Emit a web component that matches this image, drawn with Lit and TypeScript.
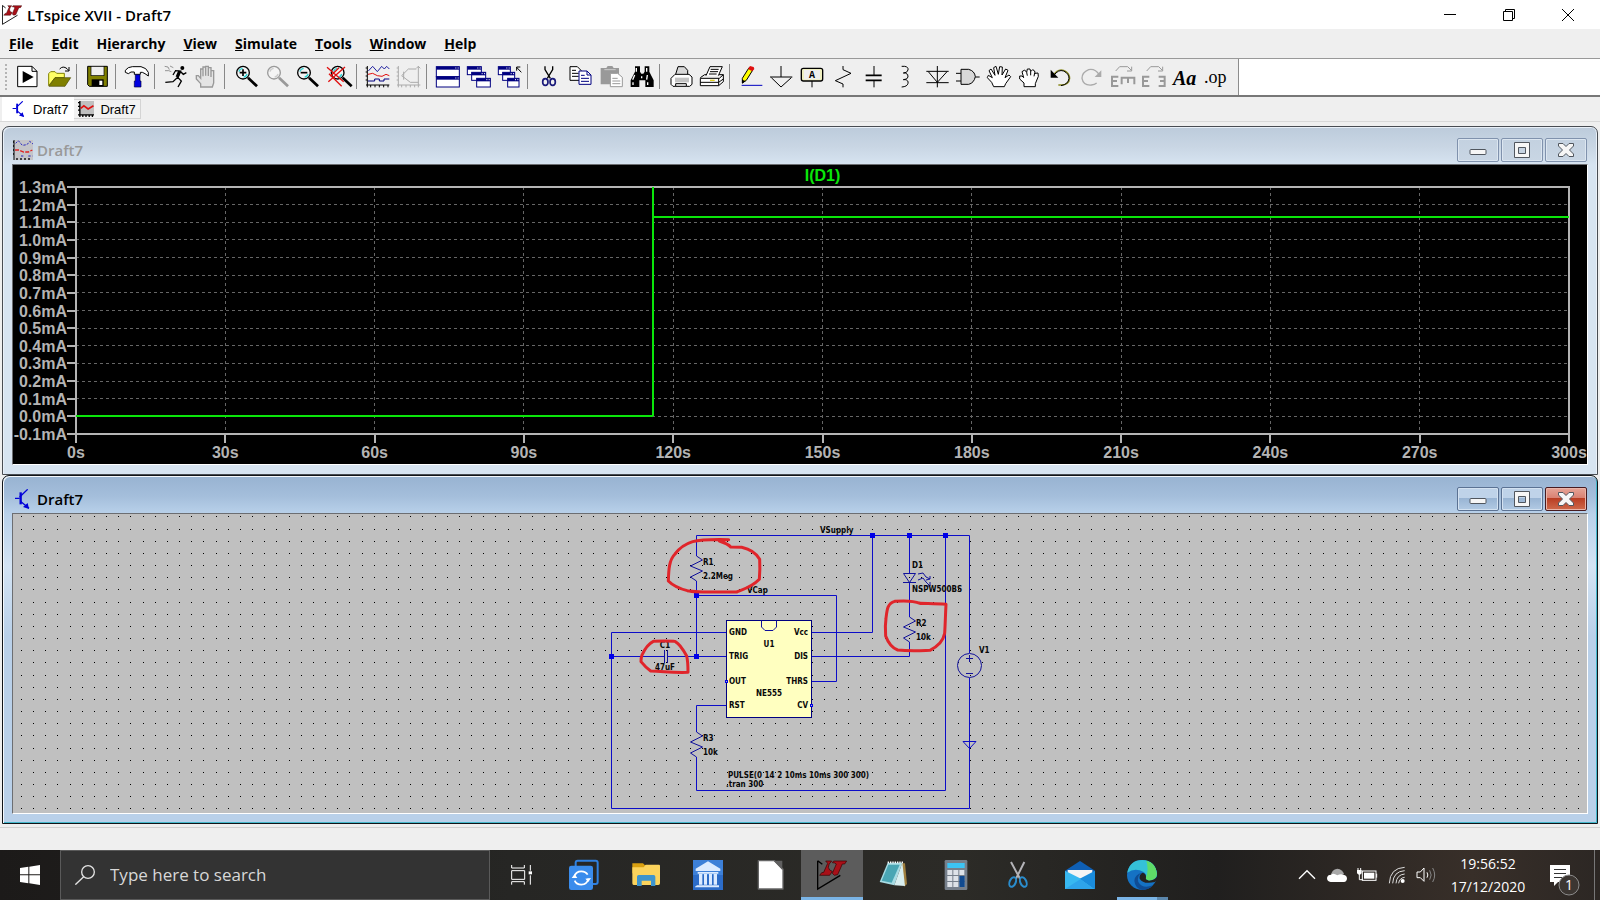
import { LitElement, html, svg, css } from "lit";
import { customElement, property } from "lit/decorators.js";
import { classMap } from "lit/directives/class-map.js";

const range = (n: number) => Array.from({ length: n }, (_, i) => i);

/* ---------- toolbar glyphs, drawn on a 72 x 72 grid ---------- */

const lens = (x: number, ring: string, shine: string, mark: unknown) => svg`
  <circle cx=${x} cy="23" r="19" fill="#f4f4f4" stroke=${ring} stroke-width="4" />
  <path d="M${x - 12} 20 q2 -9 11 -10 M${x + 12} 27 q-2 8 -10 9" fill="none" stroke=${shine} stroke-width="4" />
  <path d="M${x + 15} 38 L${x + 42} 64" stroke=${ring} stroke-width="8" />
  ${mark}`;

const miniWindow = (x: number, y: number, w: number, h: number) => svg`
  <rect x=${x} y=${y} width=${w} height=${h} fill="#fff" stroke="#000080" stroke-width="3" />
  <rect x=${x} y=${y} width=${w} height="9" fill="#000080" />
  <path d="M${x + w - 12} ${y + 4} h3 m4 0 h3" stroke="#fff" stroke-width="3" />`;

const glyphs: Record<string, unknown> = {
  run: svg`<path d="M5 4 H48 L63 19 V65 H5 Z" fill="#fff" stroke="#000" stroke-width="3" /><path d="M48 4 V19 H63" fill="none" stroke="#000" stroke-width="3" /><path d="M20 18 V54 L53 36 Z" />`,
  open: svg`<path d="M5 62 V26 L11 20 H24 L29 25 H52 V38 H24 Z" fill="#ffff66" stroke="#808000" stroke-width="3" /><path d="M6 64 L24 38 H71 L54 64 Z" fill="#808000" stroke="#4a4a00" stroke-width="2" /><path d="M38 12 Q48 1 60 11 L66 17 M66 6 V18 H54" fill="none" stroke="#000" stroke-width="3" />`,
  save: svg`<path d="M5 4 H64 V64 H10 L5 59 Z" fill="#808000" stroke="#000" stroke-width="3" /><rect x="15" y="4" width="39" height="28" fill="#efefef" stroke="#000" stroke-width="2" /><rect x="17" y="43" width="36" height="21" /><rect x="40" y="47" width="9" height="13" fill="#fff" />`,
  hammer: svg`<path d="M1 16 L10 8 L22 5 H48 L62 11 L70 22 V33 L60 26 L52 22 H46 V28 H28 V21 H18 L10 26 L1 22 Z" fill="#fff" stroke="#000" stroke-width="3" /><path d="M31 29 H45 V48 H48 V66 H28 V48 H31 Z" fill="#0000e0" stroke="#000040" stroke-width="2" />`,
  runner: svg`<circle cx="55" cy="9" r="6" /><path d="M33 17 L50 18 L42 38 L52 48 L42 66 M42 36 L27 50 L4 52 M50 20 L58 28 L67 23 M34 18 L27 30" fill="none" stroke="#000" stroke-width="4" /><path d="M47 18 L39 36" stroke="#000" stroke-width="9" /><path d="M2 4 L12 6 L16 14 M3 17 H14 L22 20 M18 3 L28 8" fill="none" stroke="#666" stroke-width="2" />`,
  halt: svg`<path d="M17 64 V56 L4 42 V32 H10 L17 40 V12 H24 V34 V6 H32 V32 V4 H40 V33 V8 H48 V36 V17 H56 V54 L52 66 H17 Z" fill="#e4e4e4" stroke="#999" stroke-width="4" />`,
  zoomIn: lens(27, "#000", "#2fd5d5", svg`<path d="M17 23 H37 M27 13 V33" stroke="#000" stroke-width="5" />`),
  zoomArea: lens(27, "#999", "#ccc", svg``),
  zoomOut: lens(24, "#000", "#2fd5d5", svg`<path d="M14 23 H34" stroke="#000" stroke-width="5" />`),
  zoomFit: lens(32, "#000", "#2fd5d5", svg`<path d="M0 7 L50 50 M54 6 L4 50 M6 26 L44 64 M36 8 L10 34" stroke="#e01010" stroke-width="4" />`),
  plot: svg`<path d="M4 3 V67 M-1 9 H4 M-1 21 H4 M-1 33 H4 M-1 45 H4 M0 60 H70 M14 60 V67 M27 60 V67 M40 60 V67 M53 60 V67 M66 60 V67" stroke="#000" stroke-width="3" fill="none" /><path d="M7 18 L20 4 L34 20 L47 4 L55 12 L62 4 L70 12" stroke="#2020a0" stroke-width="3" fill="none" /><path d="M6 28 L20 25 L34 32 L48 34 L60 28 L70 32" stroke="#e01010" stroke-width="3" fill="none" /><path d="M6 48 H26 V42 H40 V48 H54 V42 H70" stroke="#000080" stroke-width="3" fill="none" />`,
  fft: svg`<path d="M4 3 V67 M-1 9 H4 M-1 21 H4 M-1 33 H4 M-1 45 H4 M0 60 H70 M14 60 V67 M27 60 V67 M40 60 V67 M53 60 V67 M64 3 V67 M58 10 L64 4 L70 10 M14 32 L34 12 H58 M14 32 L40 52 H64 M20 20 V44" stroke="#aaa" stroke-width="3" fill="none" />`,
  tile: svg`${miniWindow(1, 5, 69, 30)}${miniWindow(1, 35, 69, 31)}`,
  cascade: svg`${miniWindow(1, 5, 42, 24)}${miniWindow(14, 22, 42, 24)}${miniWindow(29, 40, 41, 26)}`,
  closeAll: svg`${miniWindow(1, 5, 36, 24)}${miniWindow(14, 22, 36, 24)}${miniWindow(29, 40, 34, 26)}<path d="M70 22 L56 7 M56 17 V6 H67" fill="none" stroke="#000" stroke-width="3" />`,
  cut: svg`<path d="M24 4 V14 L40 40 M47 4 V14 L31 40" fill="none" stroke="#000" stroke-width="4" /><ellipse cx="25" cy="51" rx="8" ry="10" fill="none" stroke="#1a1a7a" stroke-width="5" /><ellipse cx="47" cy="51" rx="8" ry="10" fill="none" stroke="#1a1a7a" stroke-width="5" />`,
  copy: svg`<path d="M6 5 H28 L39 16 V46 H6 Z" fill="#fff" stroke="#000" stroke-width="3" /><path d="M12 16 H24 M12 25 H32 M12 34 H32" stroke="#000" stroke-width="3" /><path d="M33 18 H57 L69 30 V58 H33 Z" fill="#fff" stroke="#000080" stroke-width="3" /><path d="M57 18 V30 H69 M39 31 H50 M39 40 H63 M39 49 H63" fill="none" stroke="#000080" stroke-width="3" />`,
  paste: svg`<path d="M5 9 H22 L26 3 H40 L44 9 H60 V58 H5 Z" fill="#999" /><path d="M16 14 H50" stroke="#ccc" stroke-width="3" /><path d="M34 25 H56 L70 37 V65 H34 Z" fill="#fff" stroke="#999" stroke-width="3" /><path d="M40 40 H56 M40 48 H64 M40 56 H64" stroke="#999" stroke-width="3" />`,
  find: svg`<path d="M15 4 H30 V20 L34 26 H40 L44 20 V4 H58 V20 L71 46 V66 H46 V46 H28 V66 H2 V46 L15 20 Z" /><path d="M19 9 V20 M14 30 L8 44 M50 9 V20 M52 30 L50 44 M9 52 V60 M53 52 V60 M35 34 V40" stroke="#fff" stroke-width="4" />`,
  preview: svg`<path d="M20 28 L27 5 H46 L56 16 V30" fill="#d8d8d8" stroke="#000" stroke-width="3" /><path d="M6 40 L18 28 H60 L69 36 V58 L62 64 H52 V56 H20 V64 H12 L6 58 Z" fill="#fff" stroke="#000" stroke-width="3" /><path d="M18 38 H60 V52 H18 Z" fill="#c4c4c4" /><path d="M20 64 H52" stroke="#000" stroke-width="3" />`,
  print: svg`<path d="M18 32 L30 5 H67 L55 32" fill="#fff" stroke="#000" stroke-width="3" /><path d="M32 13 H56 M30 20 H54 M27 27 H50" stroke="#000" stroke-width="3" /><path d="M1 38 L14 29 H18 M57 29 H70 L58 40 H1 V62 H56 L70 50 V29 M56 40 V62 M1 52 H56 L70 42" fill="#fff" stroke="#000" stroke-width="3" /><path d="M30 46 H44" stroke="#e0d020" stroke-width="4" />`,
  wire: svg`<path d="M10 40 L30 8 L42 14 L22 46 L10 54 Z" fill="#ffff00" stroke="#000" stroke-width="3" /><path d="M27 12 L33 3 L44 6 L46 12 L40 19 Z" fill="#e01010" /><path d="M9 56 V44 L20 48 Z" /><path d="M8 61 H70" stroke="#0000c0" stroke-width="3" />`,
  ground: svg`<path d="M33 3 V36 M0 36 H67 M4 38 L33 66 L64 38" fill="none" stroke="#000" stroke-width="3" />`,
  label: svg`<rect x="1" y="10" width="64" height="38" rx="6" fill="#efefc0" stroke="#000" stroke-width="4" /><rect x="9" y="15" width="48" height="28" fill="#efefef" /><path d="M33 48 V67" stroke="#000" stroke-width="3" /><text class="g-label" x="33" y="40">A</text>`,
  resistor: svg`<path d="M33 3 V14 L57 25 L10 47 L33 57 V67" fill="none" stroke="#000" stroke-width="3" />`,
  capacitor: svg`<path d="M33 3 V31 M33 48 V67" stroke="#000" stroke-width="3" /><path d="M8 31 H56 M8 46 H56" stroke="#000" stroke-width="5" />`,
  inductor: svg`<path d="M23 4 H32 Q44 6 42 15 Q40 24 28 24 H34 Q44 27 42 36 Q40 44 28 44 H34 Q44 46 42 55 Q40 65 23 66" fill="none" stroke="#000" stroke-width="3" />`,
  diode: svg`<path d="M37 3 V67 M4 19 H71 M10 20 L37 52 L66 20 M4 53 H71" fill="none" stroke="#000" stroke-width="3" />`,
  gate: svg`<path d="M15 13 H38 Q56 18 58 35 Q54 54 38 58 H15 Z" fill="#d8d8d8" stroke="#000" stroke-width="3" /><path d="M0 25 H15 M0 48 H15 M58 36 H71" stroke="#000" stroke-width="3" />`,
  move: svg`<path d="M20 65 L14 52 L1 38 L4 31 L16 38 L6 17 L12 12 L24 31 L20 8 L27 4 L34 28 L38 5 L46 6 L45 30 L56 12 L63 16 L54 38 L66 30 L71 35 L56 56 L52 65 Z" fill="#fff" stroke="#000" stroke-width="3" />`,
  drag: svg`<path d="M18 65 V54 L5 42 V33 H12 L17 38 L12 20 L20 15 L26 22 L28 12 H36 L38 20 L44 14 L50 18 L51 25 L60 24 L61 34 L52 56 V65 Z" fill="#fff" stroke="#000" stroke-width="3" /><path d="M26 22 L28 32 M38 20 V31 M50 24 L48 34" stroke="#000" stroke-width="3" />`,
  undo: svg`<path d="M12 32 Q26 10 44 16 Q62 24 62 40 Q60 60 36 60 H28" fill="none" stroke="#8a8a20" stroke-width="4" /><path d="M14 32 Q28 12 44 18 Q60 26 60 40 Q58 58 36 62" fill="none" stroke="#000" stroke-width="3" /><path d="M5 14 V38 H28 Z" fill="#000" />`,
  redo: svg`<path d="M58 30 Q46 10 26 14 Q6 22 6 40 Q10 62 34 60 Q44 59 50 54" fill="none" stroke="#aaa" stroke-width="4" /><path d="M64 16 V36 H44 Z" fill="#aaa" />`,
  mirror: svg`<path d="M14 18 L26 5 H50 L60 15 M62 5 V18 H48" fill="none" stroke="#999" stroke-width="3" /><path d="M22 35 H3 V63 H22 M3 48 H18 M32 58 V38 H70 V58 M51 38 V54" fill="none" stroke="#999" stroke-width="6" />`,
  rotate: svg`<path d="M14 18 L26 5 H50 L60 15 M62 5 V18 H48" fill="none" stroke="#999" stroke-width="3" /><path d="M22 35 H3 V63 H22 M3 48 H18 M50 35 H68 V63 H50 M68 48 H54" fill="none" stroke="#999" stroke-width="6" />`,
  text: svg`<text class="g-text" x="0" y="60">Aa</text>`,
  directive: svg`<text class="g-op" x="0" y="54">.op</text>`,
};

const toolGroups: [string, string][][] = [
  [["run", "New schematic"], ["open", "Open"]],
  [["save", "Save"]],
  [["hammer", "Control panel"]],
  [["runner", "Run"], ["halt", "Halt"]],
  [["zoomIn", "Zoom in"], ["zoomArea", "Zoom area"], ["zoomOut", "Zoom out"], ["zoomFit", "Zoom full extents"]],
  [["plot", "Autorange"], ["fft", "FFT"]],
  [["tile", "Tile windows"], ["cascade", "Cascade windows"], ["closeAll", "Close windows"]],
  [["cut", "Cut"], ["copy", "Copy"], ["paste", "Paste"], ["find", "Find"]],
  [["preview", "Print setup"], ["print", "Print"]],
  [["wire", "Wire"], ["ground", "Ground"], ["label", "Label net"], ["resistor", "Resistor"], ["capacitor", "Capacitor"], ["inductor", "Inductor"], ["diode", "Diode"], ["gate", "Component"], ["move", "Move"], ["drag", "Drag"], ["undo", "Undo"], ["redo", "Redo"], ["mirror", "Rotate"], ["rotate", "Mirror"], ["text", "Text"], ["directive", "SPICE directive"]],
];

const transistor = html`<svg class="ico" viewBox="-4 0 60 60"><path d="M2 28 H16 M16 24 L40 1 M20 38 L44 58" fill="none" stroke="#0000d8" stroke-width="4" /><path d="M19 10 V46" stroke="#0000d8" stroke-width="7" /><path d="M44 60 L40 42 L26 54 Z" fill="#0000d8" /></svg>`;
const waveform = html`<svg class="ico" viewBox="0 0 60 60"><rect x="6" width="54" height="54" fill="#c0c0c0" /><path d="M7 0 V60 M0 6 H7 M0 20 H7 M0 34 H7 M0 52 H60 M18 52 V60 M30 52 V60 M42 52 V60 M54 52 V60" fill="none" stroke="#000" stroke-width="5" /><path d="M10 28 L22 18 L38 30 L58 18" fill="none" stroke="#e01010" stroke-width="6" /></svg>`;
const waveformDim = html`<svg class="ico" viewBox="0 0 60 60"><rect x="4" width="56" height="60" fill="#c4c4c8" /><path d="M3 0 V60" stroke="#000" stroke-width="3" /><path d="M0 6 H3 M0 18 H3 M0 30 H3 M0 42 H3 M12 54 V60 M24 54 V60 M36 54 V60 M48 54 V60" stroke="#000" stroke-width="4" /><path d="M8 10 L16 2 L28 16 L42 14 L50 4 L60 12 M24 48 H34 M46 48 H58" fill="none" stroke="#2828c0" stroke-width="3" stroke-dasharray="7 4" /><path d="M6 30 L18 30 L32 36 L46 36 L58 30" fill="none" stroke="#e02020" stroke-width="4" stroke-dasharray="12 4" /></svg>`;

/* slanted two-part emblem in front of an open amplifier triangle */
const emblem = svg`
  <path d="M2 2 V87 L70 46 M2 2 L16 13" fill="none" stroke="#000" stroke-width="4" />
  <path d="M26 3 H44 Q34 12 34 22 Q36 32 46 34 L38 46 H8 L14 38 L20 37 L32 10 Z" fill="#a81018" stroke="#300" stroke-width="2" />
  <path d="M50 3 H89 L83 12 H76 L62 44 L52 46 L46 40 L58 12 Q54 8 46 8 Z" fill="#a81018" stroke="#300" stroke-width="2" />`;
const ltLogo = html`<svg class="lt" viewBox="0 0 90 90">${emblem}</svg>`;

/* ---------- application menu and tool strip ---------- */

@customElement("tool-strip")
class ToolStrip extends LitElement {
  static styles = css`
    :host { display: flex; background: #fff; height: 36px; }
    .bar { display: flex; align-items: stretch; background: #efefef; border-right: 1px solid #8c8c8c; padding-right: 7px; }
    .grip { width: 2px; margin: 5px 5px 4px; background: repeating-linear-gradient(#b4b4b4 0 2px, transparent 2px 4px); }
    .group { display: flex; }
    .group + .group::before { content: ""; width: 1px; margin: 5px 5px 6px 2px; background: #888; }
    button { width: 31px; padding: 0; border: 0; background: none; display: flex; align-items: center; justify-content: center; }
    svg { width: 24px; height: 24px; overflow: visible; }
    .g-label { font: bold 30px "Liberation Mono", monospace; text-anchor: middle; }
    .g-text { font: italic bold 60px "Liberation Serif", serif; }
    .g-op { font: 54px "Liberation Serif", serif; }
  `;
  render() {
    return html`<div class="bar" role="toolbar">
      <div class="grip"></div>
      ${toolGroups.map((g) => html`<div class="group">${g.map(([id, name]) => html`<button aria-label=${name} title=${name}><svg viewBox="0 0 72 72">${glyphs[id]}</svg></button>`)}</div>`)}
    </div>`;
  }
}

/* ---------- child window frame ---------- */

@customElement("child-window")
class ChildWindow extends LitElement {
  @property() heading = "";
  @property({ type: Boolean }) active = false;
  static styles = css`
    :host { display: flex; min-height: 0; min-width: 0; }
    .frame { flex: 1; min-width: 0; display: flex; flex-direction: column; border: 1px solid #484c52; border-radius: 7px 7px 0 0; background: linear-gradient(#bccbdb, #c9d6e4 20px, #d7e4f1 38px); box-shadow: inset 1px 1px 0 #e9f0f8, inset -1px 0 0 #e9f0f8; }
    .active { border-color: #101418; background: linear-gradient(#98b3d1, #a4bedb 20px, #b9d1ea 38px, #d4e4f4 90px, #b9d0e9 160px); box-shadow: inset 1px 1px 0 #f4f8fc, inset -1px -1px 0 #45b8cc; }
    header { height: 29px; padding: 8px 10px 0; display: flex; align-items: center; }
    .icon { width: 20px; height: 20px; margin-right: 4px; }
    h2 { flex: 1; margin: 0; font: 600 15px "Open Sans", sans-serif; color: #999; }
    .active h2 { color: #000; }
    .buttons { display: flex; gap: 2px; }
    button { box-sizing: border-box; width: 42px; height: 24px; padding: 0; border: 1px solid #8092ad; border-radius: 2px; background: linear-gradient(#c3d1e0, #c9d6e4); box-shadow: inset 0 0 0 1px #dce6f0; display: flex; align-items: center; justify-content: center; }
    .active button { border-color: #5b7293; background: linear-gradient(#bfd3e9 0 45%, #98b4d3 46%, #b2cae4); box-shadow: inset 0 0 0 1px #d4e2f1; }
    .active .close { border-color: #471b20; background: linear-gradient(#e6a497, #d98172 45%, #b93c22 46%, #cf6a4c); box-shadow: inset 0 0 0 1px #eab5aa; }
    button svg { width: 18px; height: 16px; }
    .body { flex: 1; min-height: 0; margin: 0 9px 9px; display: flex; border: 1px solid; border-color: #6c6e72 #fff #fff #6c6e72; overflow: hidden; }
    ::slotted(*) { flex: 1; min-width: 0; }
  `;
  render() {
    return html`<section class=${classMap({ frame: true, active: this.active })}>
      <header>
        <span class="icon"><slot name="icon"></slot></span>
        <h2>${this.heading}</h2>
        <div class="buttons">
          <button aria-label="Minimize"><svg viewBox="0 0 18 16"><rect x="1" y="7.5" width="16" height="5" rx="1" fill="#f6f6f6" stroke="#50565e" /></svg></button>
          <button aria-label="Maximize"><svg viewBox="0 0 18 16"><path fill-rule="evenodd" d="M1.5 .5 H16.5 V15.5 H1.5 Z M5.5 5.5 V11.5 H12.5 V5.5 Z" fill="#f6f6f6" stroke="#50565e" /></svg></button>
          <button class="close" aria-label="Close"><svg viewBox="0 0 18 16"><path d="M1.5 1.5 H6 L9 4.5 L12 1.5 H16.5 V4 L12.5 8 L16.5 12 V14.5 H12 L9 11.5 L6 14.5 H1.5 V12 L5.5 8 L1.5 4 Z" fill="#f6f6f6" stroke="#50565e" /></svg></button>
        </div>
      </header>
      <div class="body"><slot></slot></div>
    </section>`;
  }
}

/* ---------- waveform viewer ---------- */

@customElement("wave-plot")
class WavePlot extends LitElement {
  static styles = css`
    :host { display: flex; background: #000; padding: 22px 18px 30px 63px; }
    svg { flex: 1; min-width: 0; overflow: visible; font: bold 16px "Liberation Sans", sans-serif; }
    .grid { stroke: #666; stroke-width: 1; stroke-dasharray: 3 3; shape-rendering: crispEdges; }
    .axis { stroke: #b4b4b4; stroke-width: 2; fill: none; shape-rendering: crispEdges; }
    .tick { fill: #b4b4b4; }
    .y { text-anchor: end; }
    .x { text-anchor: middle; }
    .trace { stroke: #0ae60a; stroke-width: 2; shape-rendering: crispEdges; }
    .name { fill: #0ae60a; text-anchor: middle; }
  `;
  render() {
    const top = 1.3, span = 1.4, total = 300;
    const yAt = (ma: number) => `${((top - ma) / span) * 100}%`;
    const xAt = (s: number) => `${(s / total) * 100}%`;
    const levels = range(15).map((i) => (13 - i) / 10);
    const times = range(11).map((i) => i * 30);
    const line = (a: number, b: number, c: number, d: number) => svg`<line class="trace" x1=${xAt(a)} y1=${yAt(b)} x2=${xAt(c)} y2=${yAt(d)} />`;
    return html`<svg width="100%" height="100%">
      ${levels.slice(1, -1).map((v) => svg`<line class="grid" x1="0" x2="100%" y1=${yAt(v)} y2=${yAt(v)} />`)}
      ${times.slice(1, -1).map((t) => svg`<line class="grid" y1="0" y2="100%" x1=${xAt(t)} x2=${xAt(t)} />`)}
      <rect class="axis" width="100%" height="100%" />
      ${levels.map((v) => svg`<line class="axis" x1="-9" x2="0" y1=${yAt(v)} y2=${yAt(v)} /><text class="tick y" x="-9" y=${yAt(v)} dy="6">${v.toFixed(1)}mA</text>`)}
      ${times.map((t) => svg`<svg class="mark" x=${xAt(t)} y="100%"><line class="axis" y1="0" y2="9" /><text class="tick x" x="0" y="24">${t}s</text></svg>`)}
      <text class="name" x="50%" y="-6">I(D1)</text>
      ${line(0, 0, 116, 0)}${line(116, 0, 116, 1.3)}${line(116, 1.13, 300, 1.13)}
    </svg>`;
  }
}

/* ---------- schematic editor ---------- */

const zigzag = (x: number, y: number) => svg`<path class="part" d="M${x} ${y} l6 4 l-12 6 l12 5 l-12 6 l6 4" />`;

const labels: [number, number, string, string?][] = [
  [820, 533, "VSupply"], [703, 565, "R1"], [703, 579, "2.2Meg"], [747, 593, "VCap"],
  [912, 568, "D1"], [912, 592, "NSPW500BS"], [916, 626, "R2"], [916, 640, "10k"],
  [979, 653, "V1"], [665, 648, "C1", "mid"], [665, 670, "47uF", "mid"],
  [729, 635, "GND"], [729, 659, "TRIG"], [729, 684, "OUT"], [729, 708, "RST"],
  [808, 635, "Vcc", "end"], [808, 659, "DIS", "end"], [808, 684, "THRS", "end"], [808, 708, "CV", "end"],
  [769, 647, "U1", "mid"], [769, 696, "NE555", "mid"], [703, 741, "R3"], [703, 755, "10k"],
  [728, 778, "PULSE(0 14 2 10ms 10ms 300 300)"], [726, 787, ".tran 300"],
];

@customElement("schematic-sheet")
class SchematicSheet extends LitElement {
  static styles = css`
    :host { display: flex; background: #c0c0c0; }
    svg { flex: 1; min-width: 0; height: 100%; }
    .dots { stroke: #000; stroke-width: 1; shape-rendering: crispEdges; }
    .wire { fill: none; stroke: #0c0cc8; stroke-width: 1; }
    .part { fill: none; stroke: #10109a; stroke-width: 1; }
    .chip { fill: #ffffc0; stroke: #000080; }
    .node { fill: #0000e8; }
    .pin { fill: #c0c0c0; stroke: #0000e8; }
    text { font: bold 8px "DejaVu Sans Condensed", "DejaVu Sans", sans-serif; font-stretch: condensed; fill: #080808; }
    .mid { text-anchor: middle; }
    .end { text-anchor: end; }
    .pen { fill: none; stroke: #e0252b; stroke-width: 9; stroke-linecap: round; stroke-linejoin: round; }
  `;
  render() {
    const pitch = 1557 / 128;
    const dots = range(25).map((j) => range(220).map((i) => `M${Math.round(21 + i * pitch)} ${Math.round(516.4 + j * pitch) + 0.5}h1`).join("")).join("");
    const nodes = [[872, 535], [909, 535], [945, 535], [696, 595], [696, 656], [611, 656]];
    return html`<svg width="100%" height="100%"><g transform="translate(-13 -514)">
      <path class="dots" d=${dots} />
      <path class="wire" d="M696.5 556 V535.5 H969.5 V653 M969.5 678 V808.5 H611.5 V632.5 H726.5 M872.5 535.5 V632.5 H811.5 M909.5 535.5 V573 M909.5 583 V617 M909.5 642 V656.5 H811.5 M945.5 535.5 V790.5 H696.5 V757 M696.5 732 V705.5 H726.5 M696.5 581 V656.5 M696.5 595.5 H836.5 V681.5 H811.5 M611.5 656.5 H664 M668 656.5 H726.5" />
      <rect class="chip" x="726.5" y="620.5" width="85" height="97" />
      <path class="part" d="M761.5 620.5 V627 L765 630.5 H773 L776.5 627 V620.5" />
      ${zigzag(696.5, 556)}${zigzag(909.5, 617)}${zigzag(696.5, 732)}
      <path class="part" d="M903.5 573.5 H915.5 L909.5 582.5 Z M903 582.5 H916 M664.5 650 V663 M667.5 650 V663 M918 574 L923 573 L926 577 L930 579 M918 580 L923 578 L926 582 L930 586 M926 580 L930 579 L930 576 M926 586 L930 586 L930 582" />
      <circle class="part" cx="969.5" cy="665.5" r="12" />
      <path class="part" d="M966 658.5 H973 M969.5 655 V662 M966 673.5 H973" />
      <path class="wire" d="M963 741.5 H976 L969.5 748.5 Z" />
      ${nodes.map(([x, y]) => svg`<rect class="node" x=${x - 2} y=${y - 2} width="5" height="5" />`)}
      <rect class="pin" x="725.5" y="680.5" width="2" height="2" /><rect class="pin" x="810.5" y="704.5" width="2" height="2" />
      ${labels.map(([x, y, t, a]) => svg`<text x=${x} y=${y} class=${a ?? ""}>${t}</text>`)}
      <g class="pen" transform="translate(600 510) scale(.33333)">
        <path d="M386 89 C340 88 300 89 278 95 C255 102 240 112 225 132 C207 150 206 180 205 213 C220 228 238 236 262 242 C290 248 370 246 410 246 C430 238 455 232 478 208 C480 185 480 165 479 148 C470 132 452 118 425 112 L392 111 C385 102 370 97 358 93" />
        <path d="M222 394 C200 392 175 393 160 394 C148 400 135 415 126 435 C122 447 123 452 123 455 C135 470 145 478 152 483 C190 483 210 489 264 487 C264 465 263 450 260 438 C250 420 240 402 226 395" />
        <path d="M960 280 C940 272 920 271 884 274 C862 280 861 300 858 325 C855 345 856 365 857 378 C865 400 880 415 893 420 C930 424 960 422 990 421 C1012 410 1030 392 1034 370 C1036 340 1036 320 1038 283 C1010 281 990 281 960 280" />
      </g>
    </g></svg>`;
  }
}

/* ---------- desktop taskbar ---------- */

const apps: { name: string; art: unknown; state?: string }[] = [
  { name: "Task view", art: svg`<path d="M14 15 V24 H52 V15 M14 74 V65 H52 V74 M14 32 H53 V58 H14 Z M70 15 V32 M70 46 V74" fill="none" stroke="#fff" stroke-width="3" /><rect x="65" y="34" width="10" height="9" fill="#fff" />` },
  { name: "Sync", art: svg`<path d="M20 22 V8 Q20 2 26 2 H80 Q86 2 86 8 V66 Q86 72 80 72 H70" fill="none" stroke="#2f80e0" stroke-width="6" /><rect x="0" y="17" width="72" height="73" rx="7" fill="#3a8cec" /><path d="M16 50 Q20 34 37 34 Q50 34 56 44 M58 56 Q54 74 37 74 Q22 74 17 62" fill="none" stroke="#fff" stroke-width="5" /><path d="M8 54 L17 42 L25 54 Z M49 56 L58 66 L66 54 Z" fill="#fff" />` },
  { name: "File Explorer", art: svg`<path d="M4 10 H36 L42 16 H84 V40 H4 Z" fill="#d9a010" /><path d="M4 22 H38 L44 14 H84 Q87 14 87 18 V70 Q87 75 82 75 H8 Q4 75 4 70 Z" fill="#fbd35c" /><path d="M18 78 V50 Q18 45 23 45 H68 Q73 45 73 50 V78 H60 V62 H32 V78 Z" fill="#3e94cc" />` },
  { name: "Library", art: svg`<rect width="90" height="90" fill="#3d80d8" /><rect y="45" width="90" height="45" fill="#2c6cc8" /><path d="M45 4 L82 26 V33 H8 V26 Z M14 36 H76 V41 H14 Z M18 42 H28 V74 H18 Z M33 42 H42 V74 H33 Z M48 42 H57 V74 H48 Z M62 42 H72 V74 H62 Z M12 76 H78 V82 H6 V80 Z" fill="#dcebff" />` },
  { name: "LibreOffice", art: svg`<path d="M10 2 H58 L84 28 V87 H10 Z" fill="#fff" stroke="#666" stroke-width="4" stroke-linejoin="round" /><path d="M56 2 H82 V30 Z" fill="#606060" />` },
  { name: "LTspice XVII", art: emblem, state: "current" },
  { name: "Notepad", art: svg`<path d="M66 10 H78 L84 72 L76 80 Z" fill="#a08040" /><path d="M26 8 H70 L46 76 L2 66 Z" fill="#a8dce4" /><path d="M28 14 H62 L38 68 L8 62 Z" fill="#4aa6b4" /><path d="M70 8 L78 78 L46 76 Z" fill="#d8eef0" /><path d="M26 7 H74" stroke="#fff" stroke-width="5" stroke-dasharray="4 3" />` },
  { name: "Calculator", art: svg`<rect x="11" y="0" width="68" height="90" rx="4" fill="#76808c" /><rect x="19" y="9" width="52" height="15" fill="#3cc4f4" />${range(9).map((i) => svg`<rect x=${19 + (i % 3) * 18} y=${30 + Math.floor(i / 3) * 18} width="15" height="15" fill="#dde2e8" />`)}<rect x="55" y="48" width="16" height="33" fill="#104a90" />` },
  { name: "Snipping tool", art: svg`<path d="M24 6 L52 58 M64 6 L38 58" stroke="#b4b4b8" stroke-width="6" /><ellipse cx="29" cy="66" rx="9" ry="15" transform="rotate(24 29 66)" fill="none" stroke="#2a8ccc" stroke-width="6" /><ellipse cx="61" cy="66" rx="9" ry="15" transform="rotate(-24 61 66)" fill="none" stroke="#2a8ccc" stroke-width="6" />` },
  { name: "Mail", art: svg`<path d="M0 32 L45 3 L90 32 V60 H0 Z" fill="#0f5fb4" /><path d="M8 30 H82 V50 L45 70 L8 50 Z" fill="#f4f4f4" /><path d="M0 32 L48 56 L90 87 H0 Z" fill="#38b8f0" /><path d="M90 32 L44 56 L88 87 H90 Z" fill="#1a8cdc" /><path d="M0 87 L46 58 L88 87 Z" fill="#2ea4ea" />` },
  { name: "Microsoft Edge", art: svg`<circle cx="45" cy="45" r="45" fill="#1572c4" /><path d="M1 38 Q8 0 46 0 Q86 2 90 42 Q88 60 66 62 Q54 60 56 52 Q60 44 50 36 Q24 22 1 38 Z" fill="#35c1d8" /><path d="M58 2 Q88 10 90 42 Q88 60 66 62 Q54 60 57 52 Q66 30 58 2 Z" fill="#5fdc68" /><path d="M46 38 Q28 46 34 66 Q46 88 78 76 Q66 90 45 90 Q24 84 22 62 Q24 42 46 38 Z" fill="#0f4c94" /><path d="M46 38 Q36 44 38 56 Q48 74 84 66 L92 58 V48 Q82 62 66 62 Q54 60 57 52 Q58 40 46 38 Z" fill="#242220" />`, state: "open" },
];

@customElement("task-bar")
class TaskBar extends LitElement {
  static styles = css`
    :host { display: flex; height: 50px; background: linear-gradient(90deg, #1c1a19, #262624 32%, #2c2b27 60%, #201f1e 76%, #382f29 92%, #2c2724); color: #fff; font: 14px "Open Sans", sans-serif; }
    button { padding: 0; border: 0; background: none; display: flex; align-items: center; justify-content: center; color: inherit; font: inherit; }
    .start { width: 60px; }
    .start svg { width: 20px; height: 20px; }
    .search { box-sizing: border-box; width: 430px; display: flex; align-items: center; background: #333; border: 1px solid #5a5a5a; padding-left: 14px; }
    .search svg { width: 20px; height: 20px; margin-right: 15px; }
    input { flex: 1; min-width: 0; padding: 0 0 2px; border: 0; background: none; outline: 0; color: #d8d8d8; font: 17px "Open Sans", sans-serif; }
    input::placeholder { color: #d8d8d8; opacity: 1; }
    .apps { display: flex; flex: 1; padding-left: 1px; }
    .app { width: 62px; box-sizing: border-box; border-top: 3px solid transparent; border-bottom: 3px solid transparent; }
    .app svg { width: 30px; height: 30px; overflow: visible; }
    .current { background: #5c5c5c; border-top-color: #5c5c5c; border-bottom-color: #7ab4e6; }
    .open { background: linear-gradient(90deg, transparent 6px, #7ab4e6 6px 46px, #5b86ab 46px 57px, transparent 57px) bottom / 100% 3px no-repeat border-box; }
    .tray { display: flex; align-items: center; }
    .tray button { width: 30px; height: 50px; }
    .tray svg { width: 22px; height: 18px; }
    .tray .clock { width: 90px; margin-left: 1px; line-height: 23px; text-align: center; }
    .tray .note { width: 61px; }
    .tray .note svg { width: 32px; height: 32px; overflow: visible; }
    .count { font: 14px "Open Sans", sans-serif; fill: #fff; text-anchor: middle; }
    .desk { width: 5px; height: 50px; border-left: 1px solid #777; }
  `;
  render() {
    return html`
      <button class="start" aria-label="Start"><svg viewBox="0 0 60 60"><path d="M0 9 L25 5 V28 H0 Z M28 5 L60 0 V28 H28 Z M0 31 H25 V55 L0 51 Z M28 31 H60 V60 L28 55 Z" fill="#fff" /></svg></button>
      <label class="search"><svg viewBox="0 0 60 60"><circle cx="39" cy="21" r="19" fill="none" stroke="#e4e4e4" stroke-width="4" /><path d="M26 35 L1 59" stroke="#e4e4e4" stroke-width="4" /></svg><input type="text" aria-label="Search" placeholder="Type here to search" /></label>
      <nav class="apps">${apps.map((a) => html`<button class="app ${a.state ?? ""}" aria-label=${a.name}><svg viewBox="0 0 90 90">${a.art}</svg></button>`)}</nav>
      <div class="tray">
        <button aria-label="Hidden icons"><svg viewBox="0 0 66 54"><path d="M9 38 L33 14 L57 38" fill="none" stroke="#fff" stroke-width="4" /></svg></button>
        <button aria-label="OneDrive"><svg viewBox="0 0 66 54"><path d="M14 32 Q16 10 34 8 Q50 10 54 24 L34 34 Z" fill="#a8a8a8" /><path d="M14 48 Q3 46 3 36 Q4 26 16 26 Q22 20 34 28 Q44 22 52 26 Q63 28 63 38 Q62 47 54 48 Z" fill="#fff" /></svg></button>
        <button aria-label="Battery"><svg viewBox="0 0 66 54"><rect x="19" y="15" width="41" height="28" fill="none" stroke="#fff" stroke-width="3" /><rect x="24" y="20" width="31" height="18" fill="#fff" /><path d="M62 23 V35 M6 6 V14 M14 6 V14 M10 26 V41 H20" fill="none" stroke="#fff" stroke-width="3" /><path d="M3 12 H17 V22 L10 28 L3 22 Z" fill="#fff" /></svg></button>
        <button aria-label="Network"><svg viewBox="0 0 66 54"><circle cx="50" cy="45" r="6" fill="#fff" /><path d="M10 52 Q12 6 56 4 M20 52 Q22 16 56 14 M30 52 Q32 26 56 24 M38 52 Q40 36 56 34" fill="none" stroke="#ddd" stroke-width="3" /></svg></button>
        <button aria-label="Volume"><svg viewBox="0 0 66 54"><path d="M3 18 H13 L24 6 V46 L13 35 H3 Z" fill="none" stroke="#fff" stroke-width="3" /><path d="M33 19 Q38 27 33 35" fill="none" stroke="#fff" stroke-width="3" /><path d="M41 13 Q50 27 41 41 M50 6 Q62 27 50 48" fill="none" stroke="#888" stroke-width="3" /></svg></button>
        <button class="clock"><span>19:56:52<br />17/12/2020</span></button>
        <button class="note" aria-label="Notifications"><svg viewBox="0 0 32 32"><path d="M2 6 H22 V23 H10 L6 27 V23 H2 Z" fill="#fff" /><path d="M6 10.5 H18 M6 14.5 H18 M6 18.5 H14" stroke="#333" /><circle cx="21" cy="26" r="10" fill="#3c3632" stroke="#8c8c8c" /><text class="count" x="21" y="31">1</text></svg></button>
        <div class="desk"></div>
      </div>`;
  }
}

/* ---------- application shell ---------- */

const menus = [["", "F", "ile"], ["", "E", "dit"], ["H", "i", "erarchy"], ["", "V", "iew"], ["", "S", "imulate"], ["", "T", "ools"], ["", "W", "indow"], ["", "H", "elp"]];

@customElement("app-root")
class AppRoot extends LitElement {
  static styles = css`
    :host { display: flex; flex-direction: column; height: 100vh; min-height: 600px; overflow: hidden; background: #efefef; color: #000; font: 600 14px "Open Sans", sans-serif; }
    .title { height: 29px; flex: none; display: flex; align-items: center; background: #fff; padding: 0 3px 0 2px; }
    .lt { width: 20px; height: 20px; margin-right: 5px; }
    h1 { flex: 1; margin: 0; font: 600 15px "Open Sans", sans-serif; }
    .title button { width: 59px; height: 29px; padding: 0; border: 0; background: none; display: flex; align-items: center; justify-content: center; }
    .title button svg { width: 14px; height: 14px; }
    .menu { height: 29px; flex: none; display: flex; align-items: center; gap: 18px; padding-left: 9px; border-bottom: 1px solid #999; }
    .menu button { padding: 0; border: 0; background: none; font: bold 14px "Open Sans", sans-serif; color: #000; }
    tool-strip { flex: none; }
    .tabs { height: 24px; flex: none; display: flex; align-items: center; border-top: 2px solid #777; border-bottom: 1px solid #d8d8d8; padding-left: 2px; }
    .tab { box-sizing: border-box; height: 20px; padding: 0 4px; display: flex; align-items: center; border: 1px solid #d4d4d4; border-left: 0; background: #f2f2f2; font: 13px "Liberation Sans", sans-serif; color: #000; }
    .tab .ico { width: 16px; height: 16px; margin-right: 6px; }
    .tab.front { height: 24px; background: #fff; border: 0; padding: 0 6px 0 9px; }
    .mdi { flex: 1; min-height: 0; display: grid; grid-template-rows: 1fr 1fr; padding: 4px 2px 3px; border-bottom: 1px solid #d0d0d0; }
    child-window .ico { width: 20px; height: 20px; display: block; }
    .status { height: 22px; flex: none; }
    task-bar { flex: none; }
  `;
  render() {
    return html`
      <div class="title">${ltLogo}<h1>LTspice XVII - Draft7</h1>
        <button aria-label="Minimize"><svg viewBox="0 0 14 14"><path d="M1 6.5 H13" stroke="#000" /></svg></button>
        <button aria-label="Restore"><svg viewBox="0 0 14 14"><path d="M1.5 3.5 H10.5 V12.5 H1.5 Z M3.5 3 V1.5 H12.5 V10.5 H11" fill="none" stroke="#000" /></svg></button>
        <button aria-label="Close"><svg viewBox="0 0 14 14"><path d="M1 1 L13 13 M13 1 L1 13" stroke="#000" /></svg></button>
      </div>
      <nav class="menu">${menus.map(([a, b, c]) => html`<button>${a}<u>${b}</u>${c}</button>`)}</nav>
      <tool-strip></tool-strip>
      <div class="tabs" role="tablist">
        <button class="tab front" role="tab" aria-selected="true">${transistor}Draft7</button>
        <button class="tab" role="tab" aria-selected="false">${waveform}Draft7</button>
      </div>
      <main class="mdi">
        <child-window heading="Draft7"><span slot="icon">${waveformDim}</span><wave-plot></wave-plot></child-window>
        <child-window heading="Draft7" active><span slot="icon">${transistor}</span><schematic-sheet></schematic-sheet></child-window>
      </main>
      <div class="status"></div>
      <task-bar></task-bar>`;
  }
}
